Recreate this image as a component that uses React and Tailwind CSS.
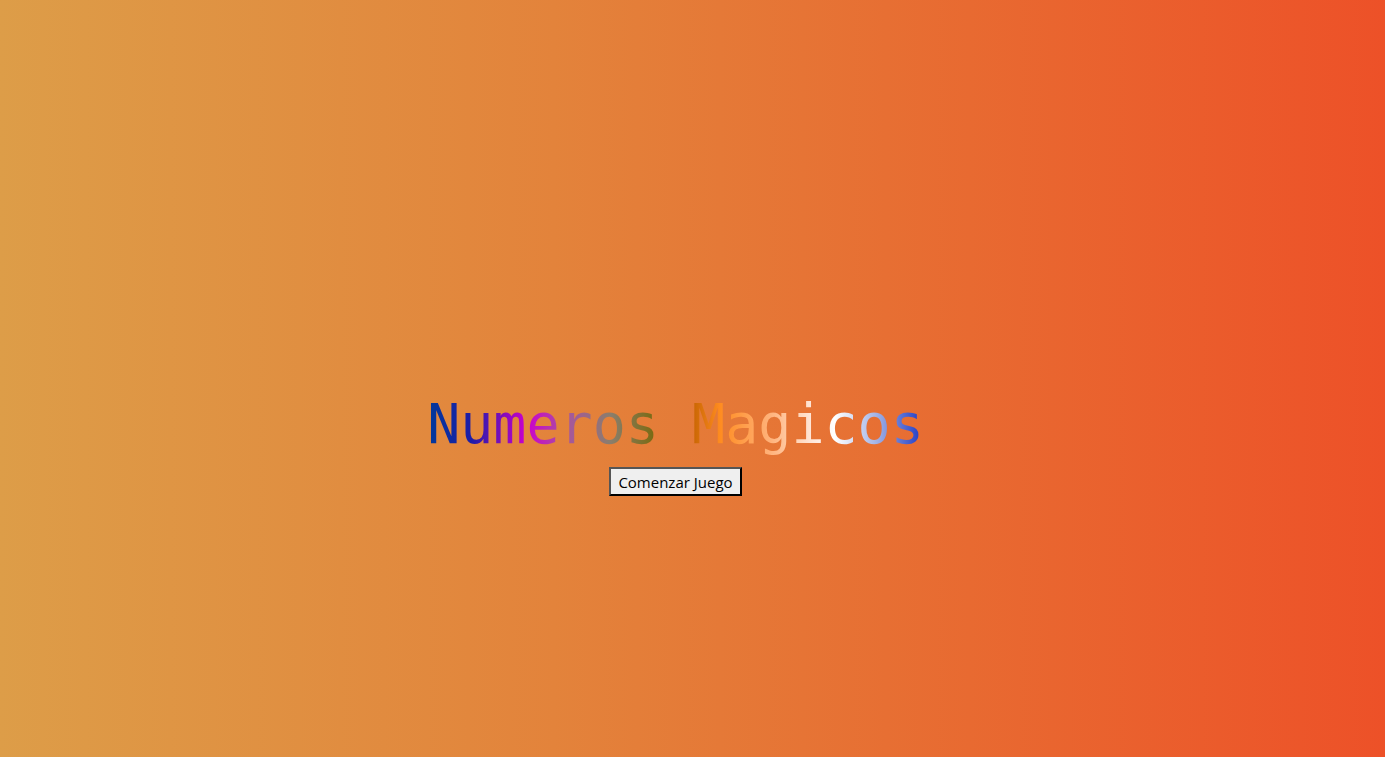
export default function App() {
  return (
    <div className="min-h-screen w-full bg-[linear-gradient(to_right,#dd9d48,#e3833b_40%,#e86a31_70%,#ed5128)]">
      <div className="flex flex-col items-center pt-[392px] pr-[34px]">
        <h1
          className="inline-block bg-[linear-gradient(to_right,#003a9a_0%,#1e1ca8_9%,#cc00cc_20%,#a8559e_28%,#8a7e6c_37%,#7a6a10_46%,#c46200_53%,#ff8c20_59%,#ffb27a_69%,#ffe4d4_77%,#ffffff_82%,#a8b8e8_90%,#1a36c4_100%)] bg-clip-text text-transparent text-[55px] leading-[64px] whitespace-pre"
          style={{ fontFamily: '"DejaVu Sans Mono", monospace' }}
        >
          Numeros Magicos
        </h1>
        <button
          className="mt-[11px] h-[29px] px-[7px] pt-[2px] bg-[#efefef] border-2 border-t-[#555] border-l-[#555] border-r-black border-b-black text-[15px] text-black leading-none"
          style={{ fontFamily: '"Open Sans", sans-serif' }}
        >
          Comenzar Juego
        </button>
      </div>
    </div>
  );
}
